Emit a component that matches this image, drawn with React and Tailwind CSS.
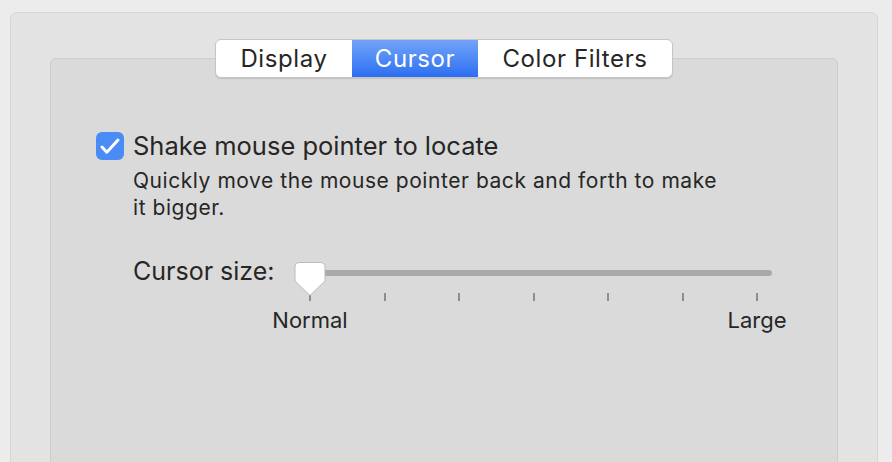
import React from 'react';

const font = { fontFamily: 'Inter, "Helvetica Neue", Arial, sans-serif' };

const tabs = [
  { label: 'Display', width: 'w-[136px]' },
  { label: 'Cursor', width: 'w-[126px]', active: true },
  { label: 'Color Filters', width: 'w-[194px]' },
];

const Tabs = () => (
  <div className="flex justify-center -mt-[20px]">
    <div className="flex h-[39px] rounded-[6px] border border-[#c6c6c6] bg-white overflow-hidden shadow-[0_1px_1px_rgba(0,0,0,0.12)]">
      {tabs.map((t) => (
        <div
          key={t.label}
          className={`${t.width} flex items-center justify-center text-[24px] tracking-[0.6px] ${
            t.active
              ? 'bg-gradient-to-b from-[#72a3f8] to-[#2b6ef1] text-white'
              : 'text-[#262626]'
          }`}
        >
          {t.label}
        </div>
      ))}
    </div>
  </div>
);

const Checkbox = () => (
  <div className="w-[28px] h-[28px] rounded-[6px] bg-[#4b8bf5] flex items-center justify-center shrink-0">
    <svg width="28" height="28" viewBox="0 0 28 28">
      <path
        d="M6 15 L10.8 20.2 L22 8"
        fill="none"
        stroke="white"
        strokeWidth="3"
        strokeLinecap="round"
        strokeLinejoin="round"
      />
    </svg>
  </div>
);

const Thumb = () => (
  <svg className="absolute -left-[1px] top-[6px]" width="32" height="34" viewBox="0 0 32 34">
    <path
      d="M5 0.5 H27 Q31 0.5 31 4.5 V19 L16.5 33 H15.5 L1 19 V4.5 Q1 0.5 5 0.5 Z"
      fill="white"
      stroke="#bcbcbc"
      strokeWidth="1"
    />
  </svg>
);

const Slider = () => {
  const ticks = [0, 1, 2, 3, 4, 5, 6];
  return (
    <div className="relative w-[477px] pt-[14px]">
      <div className="h-[6px] rounded-full bg-[#a9a9a9]" />
      <div className="flex justify-between px-[14px] mt-[17px]">
        {ticks.map((i) => (
          <div key={i} className="w-[2px] h-[8px] bg-[#8d8d8d]" />
        ))}
      </div>
      <div className="flex justify-between px-[14px] mt-[6px]">
        <div className="w-[2px] flex justify-center">
          <span className="whitespace-nowrap text-[22px] leading-[26px] text-[#262626]">Normal</span>
        </div>
        <div className="w-[2px] flex justify-center">
          <span className="whitespace-nowrap text-[22px] leading-[26px] text-[#262626]">Large</span>
        </div>
      </div>
      <Thumb />
    </div>
  );
};

export default function App() {
  return (
    <div style={font} className="h-[462px] w-[892px] overflow-hidden bg-[#ececec] pt-[12px] pl-[10px] pr-[14px]">
      <div className="h-[520px] rounded-[7px] border border-[#d6d6d6] bg-[#e3e3e3] pt-[45px] px-[39px]">
        <div className="h-[480px] rounded-[6px] border border-[#cdcdcd] bg-[#dadada]">
          <Tabs />
          <div className="pl-[45px]">
            <div className="mt-[52px] flex items-center gap-[9px]">
              <Checkbox />
              <span className="text-[25.5px] leading-[32px] text-[#262626] whitespace-nowrap">
                Shake mouse pointer to locate
              </span>
            </div>
            <p className="mt-[5px] ml-[37px] text-[21px] tracking-[0.55px] leading-[27px] text-[#262626] whitespace-nowrap">
              Quickly move the mouse pointer back and forth to make
              <br />
              it bigger.
            </p>
            <div className="mt-[35px] ml-[37px] flex items-start">
              <span className="w-[162px] shrink-0 text-[25px] leading-[30px] text-[#262626] whitespace-nowrap">
                Cursor size:
              </span>
              <Slider />
            </div>
          </div>
        </div>
      </div>
    </div>
  );
}
